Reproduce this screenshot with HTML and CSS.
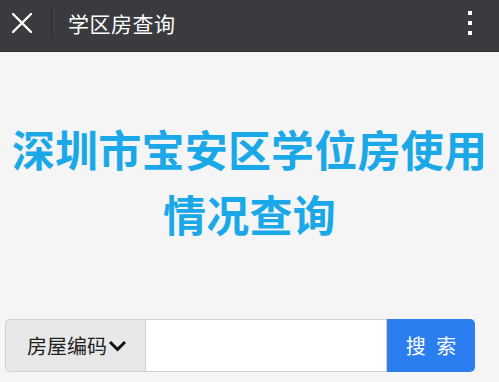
FILE: index.html
```html
<!DOCTYPE html>
<html lang="zh-CN">
<head>
    <meta charset="UTF-8">
    <meta name="viewport" content="width=device-width, initial-scale=1.0">
    <title>学区房查询</title>
    <link rel="stylesheet" href="styles.css">
</head>
<body>
    <!-- Top bar -->
    <div class="top-bar">
        <span class="close-btn">
            <svg width="20" height="20" viewBox="0 0 20 20">
                <path d="M1 1 L19 19 M19 1 L1 19" stroke="#fff" stroke-width="2.4" stroke-linecap="round"/>
            </svg>
        </span>
        <span class="divider"></span>
        <span class="page-title">学区房查询</span>
        <span class="more-btn">
            <i></i><i></i><i></i>
        </span>
    </div>

    <div class="content">
        <h1 class="headline">深圳市宝安区学位房使用<br>情况查询</h1>

        <div class="search-group">
            <div class="search-type">房屋编码<svg width="19" height="12" viewBox="0 0 19 12"><path d="M2 2 L9.5 9.5 L17 2" fill="none" stroke="#111" stroke-width="3"/></svg></div>
            <input class="search-input" type="text">
            <button class="search-btn">搜 索</button>
        </div>
    </div>
</body>
</html>
```

FILE: styles.css
```css
/* Reset default styles */
* {
    margin: 0;
    padding: 0;
    box-sizing: border-box;
}

body {
    font-family: 'Noto Sans CJK SC', 'Noto Sans', sans-serif;
    background-color: #f5f5f5;
    width: 499px;
    height: 382px;
    overflow: hidden;
}

/* Dark header bar */
.top-bar {
    height: 52px;
    background-color: #3a3b3f;
    border-bottom: 1px solid #2a2b2e;
    display: flex;
    align-items: center;
    padding-left: 12px;
    color: #fff;
}

.close-btn {
    display: flex;
    width: 20px;
    height: 20px;
    margin-top: -6px;
}

.divider {
    width: 1px;
    height: 30px;
    background-color: #2c2d30;
    margin-left: 19px;
    margin-top: -6px;
}

.page-title {
    font-size: 21px;
    margin-left: 16px;
    margin-top: -6px;
    letter-spacing: 0.5px;
}

.more-btn {
    margin-left: auto;
    margin-right: 27px;
    margin-top: -6px;
    display: flex;
    flex-direction: column;
    gap: 6px;
}

.more-btn i {
    display: block;
    width: 4px;
    height: 4px;
    background-color: #fff;
}

/* Main area */
.content {
    padding: 0 5px;
}

.headline {
    margin-top: 64px;
    text-align: center;
    color: #1ba8e8;
    font-size: 43px;
    font-weight: bold;
    line-height: 65px;
    letter-spacing: 0.2px;
}

/* Search row */
.search-group {
    margin-top: 73px;
    display: flex;
    height: 53px;
    width: 470px;
}

.search-type {
    width: 140px;
    background-color: #e8e8e8;
    border: 1px solid #cfcfcf;
    border-right: none;
    border-radius: 5px 0 0 5px;
    display: flex;
    align-items: center;
    padding-left: 21px;
    font-size: 20px;
    color: #222;
}

.search-type svg {
    margin-left: 1px;
}

.search-input {
    width: 242px;
    border: 1px solid #cfcfcf;
    background-color: #fff;
    outline: none;
}

.search-btn {
    width: 88px;
    background-color: #2b7ef0;
    border: none;
    border-radius: 0 5px 5px 0;
    color: #fff;
    font-family: inherit;
    font-size: 20px;
    letter-spacing: 3px;
    padding-left: 3px;
}
```
